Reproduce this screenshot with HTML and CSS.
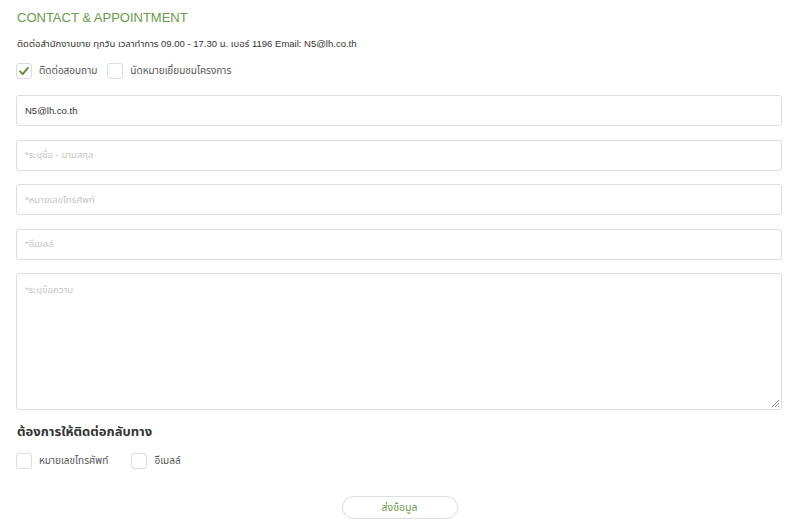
FILE: index.html
```html
<!DOCTYPE html>
<html lang="th">
<head>
<meta charset="utf-8">
<link rel="stylesheet" href="styles.css">
</head>
<body>
<div class="page">
  <h1 class="title">CONTACT &amp; APPOINTMENT</h1>
  <p class="info">ติดต่อสำนักงานขาย ทุกวัน เวลาทำการ 09.00 - 17.30 น. เบอร์ 1196 Email: N5@lh.co.th</p>
  <div class="checks top">
    <label class="check"><span class="box checked"><svg viewBox="0 0 16 16" width="16" height="16"><path d="M3.5 8.5 L6.5 11.5 L12.5 4.5" fill="none" stroke="#5e8f3e" stroke-width="2.2" stroke-linecap="round" stroke-linejoin="round"/></svg></span><span>ติดต่อสอบถาม</span></label>
    <label class="check"><span class="box"></span><span>นัดหมายเยี่ยมชมโครงการ</span></label>
  </div>
  <div class="field filled">N5@lh.co.th</div>
  <div class="field">*ระบุชื่อ - นามสกุล</div>
  <div class="field">*หมายเลขโทรศัพท์</div>
  <div class="field">*อีเมลล์</div>
  <div class="field area">*ระบุข้อความ
    <svg class="grip" viewBox="0 0 10 10" width="10" height="10"><path d="M9 2 L2 9 M9 5 L5 9 M9 8 L8 9" stroke="#888" stroke-width="1"/></svg>
  </div>
  <h2 class="sub">ต้องการให้ติดต่อกลับทาง</h2>
  <div class="checks bottom">
    <label class="check"><span class="box"></span><span>หมายเลขโทรศัพท์</span></label>
    <label class="check"><span class="box"></span><span>อีเมลล์</span></label>
  </div>
  <div class="actions"><button class="submit">ส่งข้อมูล</button></div>
</div>
</body>
</html>
```
FILE: styles.css
```css
html, body { margin: 0; padding: 0; background: #fff; }
body { font-family: "Liberation Sans", "Noto Sans Thai", "Noto Sans", sans-serif; color: #333; }
.page { padding: 9px 18px 0 16px; }
.title { margin: 0 0 0 1px; font-size: 13px; font-weight: normal; color: #6b9a4b; line-height: 18px; }
.info { margin: 11px 0 0 1px; font-size: 9.5px; line-height: 12px; color: #333; }
.checks { display: flex; align-items: center; font-size: 10px; color: #555; }
.checks.top { margin-top: 13px; gap: 10px; }
.check { display: flex; align-items: center; gap: 7px; }
.box { width: 14px; height: 14px; border: 1px solid #ddd; border-radius: 3px; display: inline-flex; align-items: center; justify-content: center; background: #fff; }
.field { box-sizing: border-box; height: 31px; border: 1px solid #ddd; border-radius: 3px; padding: 0 8px; display: flex; align-items: center; font-size: 9.5px; color: #c4c4c4; margin-top: 13.5px; }
.checks.top + .field { margin-top: 16px; }
.field.filled { color: #333; }
.field.area { height: 137px; align-items: flex-start; padding-top: 9px; position: relative; }
.grip { position: absolute; right: 1px; bottom: 1px; }
.sub { margin: 14px 0 0 1px; font-size: 13px; font-weight: bold; color: #333; line-height: 16px; }
.checks.bottom { margin-top: 13px; gap: 23px; }
.actions { display: flex; justify-content: center; margin-top: 27px; padding-left: 1px; }
.submit { width: 116px; height: 23px; border: 1px solid #ddd; border-radius: 12px; background: #fff; color: #6b9a4b; font-family: inherit; font-size: 10.5px; padding: 0; }
```
